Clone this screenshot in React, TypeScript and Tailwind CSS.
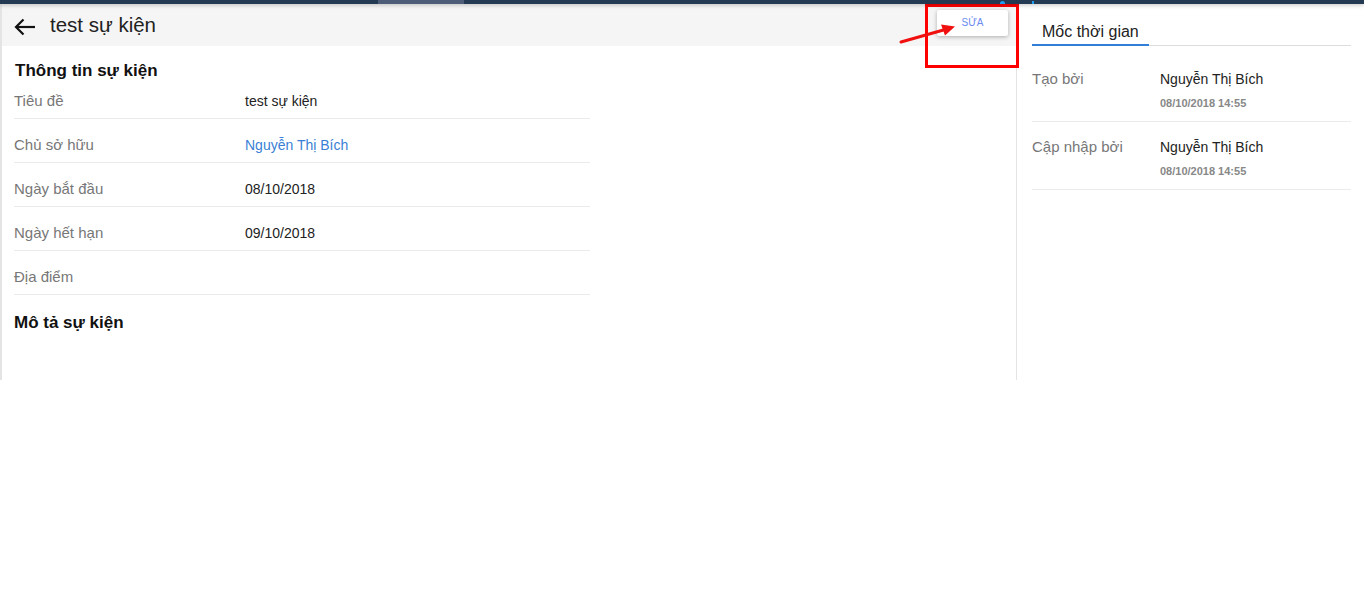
import React from "react";

const font = { fontFamily: '"Liberation Sans", Arial, sans-serif' };

type Field = { label: string; value?: string; link?: boolean };

const fields: Field[] = [
  { label: "Tiêu đề", value: "test sự kiện" },
  { label: "Chủ sở hữu", value: "Nguyễn Thị Bích", link: true },
  { label: "Ngày bắt đầu", value: "08/10/2018" },
  { label: "Ngày hết hạn", value: "09/10/2018" },
  { label: "Địa điểm" },
];

const history = [
  { label: "Tạo bởi", name: "Nguyễn Thị Bích", time: "08/10/2018 14:55" },
  { label: "Cập nhập bởi", name: "Nguyễn Thị Bích", time: "08/10/2018 14:55" },
];

function BackArrow() {
  return (
    <svg width="22" height="18" viewBox="0 0 22 18" fill="none" stroke="#111" strokeWidth="2.2">
      <path d="M21 9H2" />
      <path d="M9.5 1.5L2 9l7.5 7.5" />
    </svg>
  );
}

export default function App() {
  return (
    <div className="relative min-h-[615px] bg-white text-[#222]" style={font}>
      {/* top nav strip */}
      <div className="relative z-10 flex h-[4px] bg-[#243a53] shadow-[0_1px_4px_rgba(0,0,0,0.25)]">
        <div className="ml-[378px] h-full w-[86px] bg-[#4e5d77]" />
        <div className="ml-[536px] h-[3px] w-[5px] self-end rounded-t bg-[#1f9cf0]" />
        <div className="ml-[27px] h-[3px] w-[2px] self-end bg-[#1f9cf0]" />
      </div>

      <div className="flex">
        {/* left panel */}
        <div className="h-[376px] w-[1017px] border-l-2 border-r border-[#e4e4e4]">
          <div className="flex h-[42px] items-center justify-between bg-[#f5f5f5] pr-[8px]">
            <div className="flex items-center">
              <div className="ml-[12px] mt-[4px] flex w-[36px]">
                <BackArrow />
              </div>
              <span className="text-[20.5px] leading-[24px] text-[#222]">test sự kiện</span>
            </div>
            <button className="mb-[5px] h-[26px] w-[71px] rounded-[2px] bg-white text-[10px] text-[#6a8af0] shadow-[0_1px_4px_rgba(0,0,0,0.3)]">
              SỬA
            </button>
          </div>

          <div className="pl-[12px]">
            <div className="mt-[15px] pl-[1px] text-[17px] font-bold leading-[20px] text-[#111]">
              Thông tin sự kiện
            </div>
            <div className="mt-[-6px] w-[576px]">
              {fields.map((f) => (
                <div
                  key={f.label}
                  className="flex items-center border-b border-[#ebebeb] pb-[7px] pt-[16px] leading-[20px]"
                >
                  <div className="w-[231px] text-[15px] text-[#777]">{f.label}</div>
                  <div className={"text-[14px] " + (f.link ? "text-[#3a7fd5]" : "text-[#222]")}>
                    {f.value}
                  </div>
                </div>
              ))}
            </div>
            <div className="mt-[18px] text-[17px] font-bold leading-[20px] text-[#111]">
              Mô tả sự kiện
            </div>
          </div>
        </div>

        {/* right panel */}
        <div className="flex-1 pl-[15px] pr-[13px] pt-[18px]">
          <div className="flex">
            <div className="w-[117px] border-b-2 border-[#2f7fd8] pb-[2px] pl-[10px] text-[16px] leading-[20px] text-[#222]">
              Mốc thời gian
            </div>
            <div className="flex-1 border-b border-[#ddd]" />
          </div>
          <div className="mt-[8px]">
            {history.map((h) => (
              <div key={h.label} className="flex border-b border-[#ebebeb] pb-[11px] pt-[15px]">
                <div className="w-[128px] text-[15px] leading-[20px] text-[#777]">{h.label}</div>
                <div>
                  <div className="text-[14px] leading-[20px] text-[#222]">{h.name}</div>
                  <div className="mt-[7px] text-[11px] font-bold leading-[14px] text-[#888]">{h.time}</div>
                </div>
              </div>
            ))}
          </div>
        </div>
      </div>

      {/* annotation overlay */}
      <div className="absolute left-[925px] top-[4px] h-[64px] w-[94px] border-[3px] border-[#ff0000]" />
      <svg className="absolute left-[895px] top-[20px]" width="70" height="30" viewBox="0 0 70 30">
        <path d="M6 22L52 9" stroke="#f01010" strokeWidth="3" strokeLinecap="round" />
        <path d="M60 6.5L46 4.5L50 15.5Z" fill="#f01010" />
      </svg>
    </div>
  );
}
